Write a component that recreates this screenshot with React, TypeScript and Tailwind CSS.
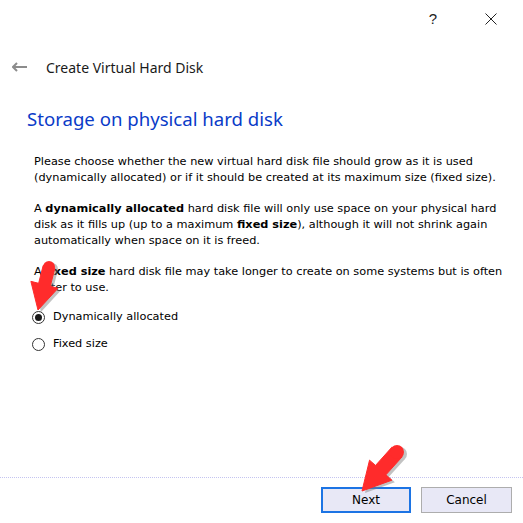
import React from "react";

type Pt = [number, number];

// arrow polygon from tail to tip, with a triangular head
function arrowPoints(tail: Pt, tip: Pt, shaft: number, headLen: number, headHalf: number) {
  const dx = tip[0] - tail[0];
  const dy = tip[1] - tail[1];
  const len = Math.hypot(dx, dy);
  const ux = dx / len;
  const uy = dy / len;
  const nx = -uy;
  const ny = ux;
  const bx = tip[0] - ux * headLen;
  const by = tip[1] - uy * headLen;
  const pts: Pt[] = [
    [tail[0] + nx * shaft, tail[1] + ny * shaft],
    [bx + nx * shaft, by + ny * shaft],
    [bx + nx * headHalf, by + ny * headHalf],
    tip,
    [bx - nx * headHalf, by - ny * headHalf],
    [bx - nx * shaft, by - ny * shaft],
    [tail[0] - nx * shaft, tail[1] - ny * shaft],
  ];
  return pts.map((p) => p.join(",")).join(" ");
}

function RedArrow({ tail, tip, shaft, headLen, headHalf }: { tail: Pt; tip: Pt; shaft: number; headLen: number; headHalf: number }) {
  const pts = arrowPoints(tail, tip, shaft, headLen, headHalf);
  return (
    <g>
      <g transform="translate(3,2)" opacity="0.45">
        <polygon points={pts} fill="#7a7a7a" strokeLinejoin="round" />
        <circle cx={tail[0]} cy={tail[1]} r={shaft} fill="#7a7a7a" />
      </g>
      <polygon points={pts} fill="#ff2b2b" stroke="#ff2b2b" strokeWidth="1" strokeLinejoin="round" />
      <circle cx={tail[0]} cy={tail[1]} r={shaft} fill="#ff2b2b" />
    </g>
  );
}

function Radio({ checked, label }: { checked?: boolean; label: string }) {
  return (
    <div className="h-[27px] flex items-center">
      <div className="ml-[32px] w-[13px] h-[13px] rounded-full border border-[#333] bg-white flex items-center justify-center">
        {checked && <div className="w-[7px] h-[7px] rounded-full bg-[#1a1a1a]" />}
      </div>
      <span className="ml-[8px] text-[11.3px] text-black">{label}</span>
    </div>
  );
}

export default function App() {
  return (
    <div className="relative w-[523px] h-[523px] bg-white overflow-hidden flex flex-col font-['DejaVu_Sans',sans-serif]">
      {/* title bar */}
      <div className="h-[38px] flex items-center justify-end pr-[3px]">
        <div className="w-[58px] flex justify-center text-[15px] text-[#222] font-['Liberation_Sans',sans-serif]">?</div>
        <div className="w-[58px] flex justify-center">
          <svg width="12" height="12" viewBox="0 0 12 12">
            <path d="M0.5 0.5 L11.5 11.5 M11.5 0.5 L0.5 11.5" stroke="#222" strokeWidth="1" />
          </svg>
        </div>
      </div>

      {/* wizard header */}
      <div className="mt-[12px] h-[34px] flex items-center">
        <svg className="ml-[12px]" width="16" height="10" viewBox="0 0 16 10">
          <path d="M1 5 H15 M5 1 L1 5 L5 9" stroke="#8c8c8c" strokeWidth="2" fill="none" />
        </svg>
        <span className="ml-[18px] text-[14px] text-[#1a1a1a] font-['Noto_Sans',sans-serif]">Create Virtual Hard Disk</span>
      </div>

      <div className="mt-[21px] ml-[27px] h-[28px] flex items-center text-[18.6px] text-[#0a3bc8] font-['Noto_Sans',sans-serif]">
        Storage on physical hard disk
      </div>

      {/* body */}
      <div className="mt-[21px] ml-[34px] text-[11.3px] leading-[16px] text-black">
        <p>
          Please choose whether the new virtual hard disk file should grow as it is used
          <br />
          (dynamically allocated) or if it should be created at its maximum size (fixed size).
        </p>
        <p className="mt-[15px]">
          A <b>dynamically allocated</b> hard disk file will only use space on your physical hard
          <br />
          disk as it fills up (up to a maximum <b>fixed size</b>), although it will not shrink again
          <br />
          automatically when space on it is freed.
        </p>
        <p className="mt-[15px]">
          A <b>fixed size</b> hard disk file may take longer to create on some systems but is often
          <br />
          faster to use.
        </p>
      </div>

      <div className="mt-[8px]">
        <Radio checked label="Dynamically allocated" />
        <Radio label="Fixed size" />
      </div>

      <div className="flex-1" />

      <div className="border-t border-dotted border-[#c4c4f0]" />
      <div className="mt-[9px] mb-[10px] mr-[11px] flex justify-end gap-[10px] text-[12px] text-black">
        <button className="w-[90px] h-[26px] border-2 border-[#1c74e4] bg-[#e8e8f6]">Next</button>
        <button className="w-[91px] h-[26px] border border-[#adadad] bg-[#e8e8f6]">Cancel</button>
      </div>

      {/* annotation arrows */}
      <svg className="absolute inset-0 pointer-events-none" width="523" height="523">
        <RedArrow tail={[49, 267]} tip={[38, 310]} shaft={6} headLen={26} headHalf={14} />
        <RedArrow tail={[397, 452]} tip={[362, 491]} shaft={7} headLen={28} headHalf={15} />
      </svg>
    </div>
  );
}
